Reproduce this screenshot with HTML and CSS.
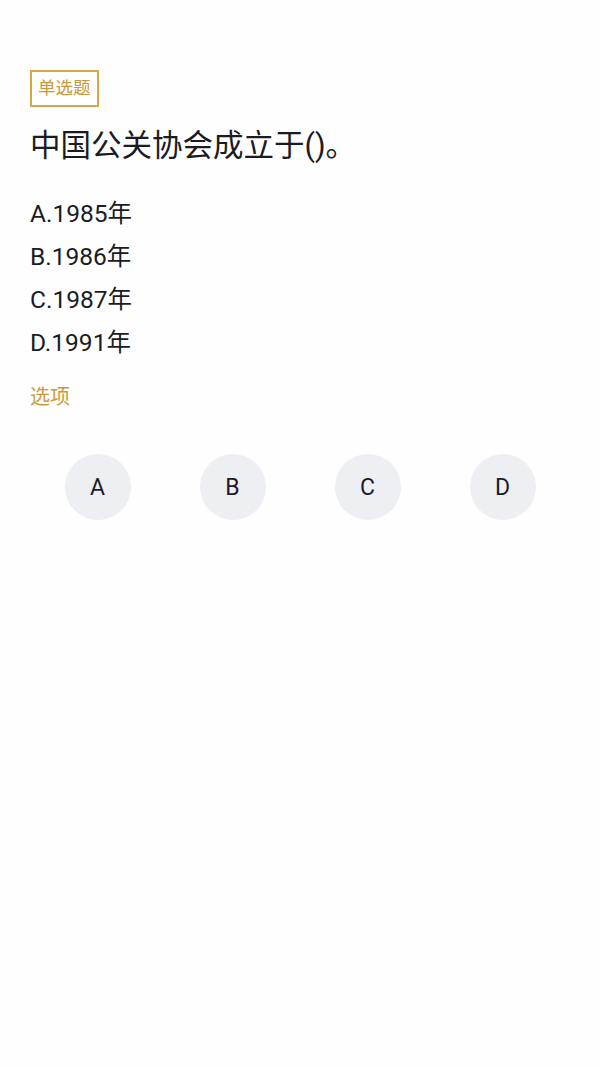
FILE: index.html
```html
<!DOCTYPE html>
<html lang="zh">
<head>
    <meta charset="utf-8" />
    <link rel="stylesheet" href="styles.css">
    <title>单选题</title>
</head>
<body>
    <div class="page">
        <div class="tagrow">
            <span class="tag">单选题</span>
        </div>
        <div class="question">中国公关协会成立于()。</div>
        <div class="options">
            <div class="option">A.1985年</div>
            <div class="option">B.1986年</div>
            <div class="option">C.1987年</div>
            <div class="option">D.1991年</div>
        </div>
        <div class="label">选项</div>
        <div class="choices">
            <div class="cell"><button class="choice">A</button></div>
            <div class="cell"><button class="choice">B</button></div>
            <div class="cell"><button class="choice">C</button></div>
            <div class="cell"><button class="choice">D</button></div>
        </div>
    </div>
</body>
</html>
```

FILE: styles.css
```css
body {
    margin: 0;
    background-color: #fefefe;
    font-family: "Roboto", "Noto Sans CJK SC", sans-serif;
    color: #1b1b22;
}
.page {
    padding: 70px 30px 0 30px;
}
.tagrow {
    display: flex;
}
.tag {
    display: inline-block;
    height: 37px;
    line-height: 33px;
    padding: 0 6px;
    box-sizing: border-box;
    border: 2px solid #d6a748;
    color: #c99a3c;
    font-size: 17.5px;
}
.question {
    margin-top: 19px;
    font-size: 30.5px;
    line-height: 40px;
}
.options {
    margin-top: 26px;
}
.option {
    font-size: 24.5px;
    line-height: 43px;
}
.label {
    margin-top: 18px;
    color: #c99a3c;
    font-size: 20px;
    line-height: 30px;
}
.choices {
    margin-top: 42px;
    display: grid;
    grid-template-columns: repeat(4, 1fr);
}
.cell {
    display: flex;
    justify-content: center;
}
.choice {
    width: 66px;
    height: 66px;
    border: none;
    border-radius: 50%;
    background-color: #eeeff2;
    color: #1b1b2a;
    font-family: "Roboto", sans-serif;
    font-size: 23px;
    padding: 0;
}
```
